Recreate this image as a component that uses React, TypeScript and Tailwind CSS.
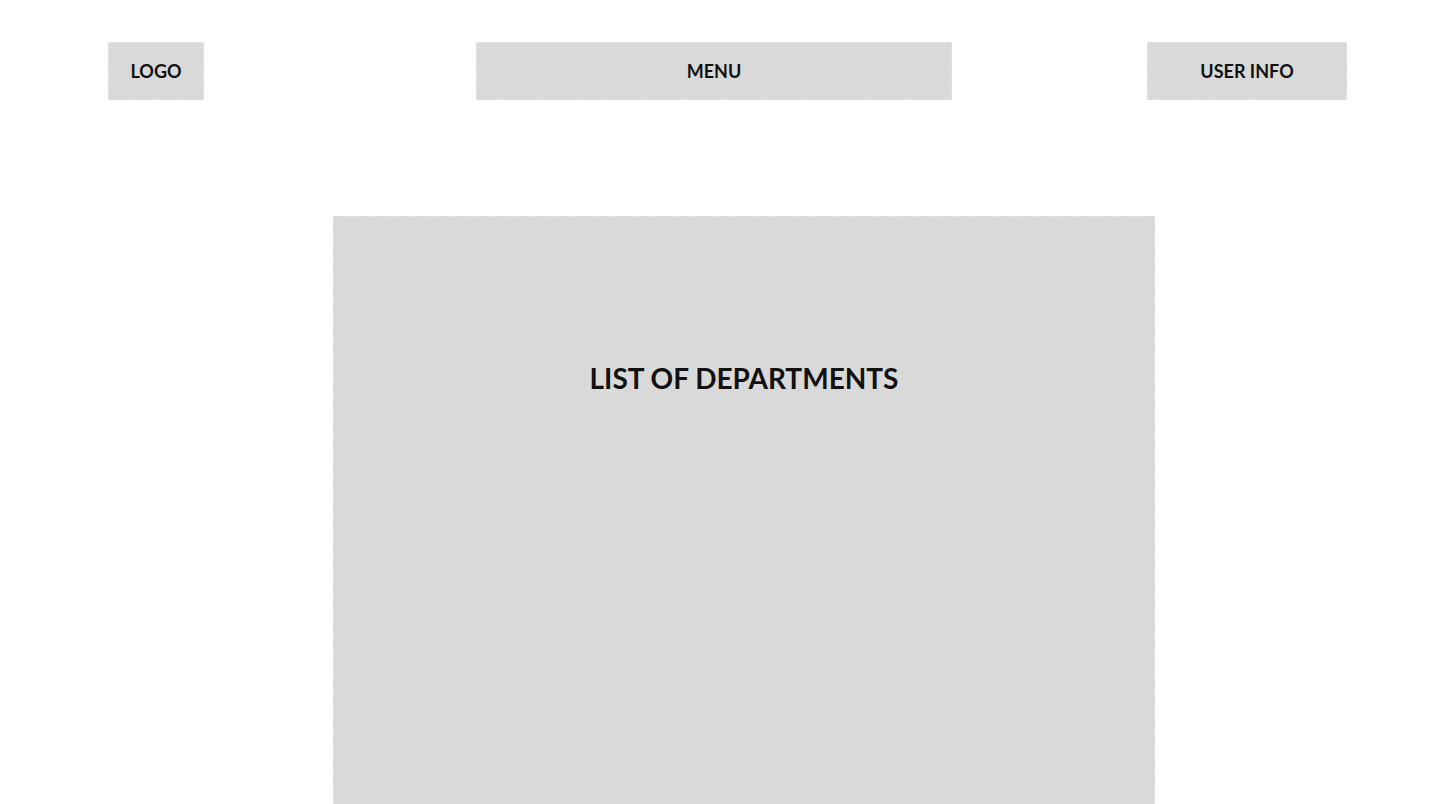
const boxClass =
  "flex h-[58px] items-center justify-center border border-dashed border-[#e4e4e4] bg-[#d9d9d9] text-[18px] font-bold text-[#111]";

export default function App() {
  return (
    <div className="min-h-screen bg-white font-['Lato','Open_Sans',sans-serif]">
      <header className="flex items-start pt-[42px]">
        <div className={`${boxClass} ml-[108px] w-[96px]`}>LOGO</div>
        <nav className={`${boxClass} ml-[272px] w-[476px]`}>MENU</nav>
        <div className={`${boxClass} ml-[195px] w-[200px]`}>USER INFO</div>
      </header>

      <main className="mt-[116px] h-[600px] overflow-hidden">
        <section className="ml-[333px] h-full w-[822px] border border-dashed border-[#e4e4e4] bg-[#d9d9d9] pt-[140px] text-center">
          <h1 className="text-[28px] font-bold text-[#111]">LIST OF DEPARTMENTS</h1>
        </section>
      </main>
    </div>
  );
}
